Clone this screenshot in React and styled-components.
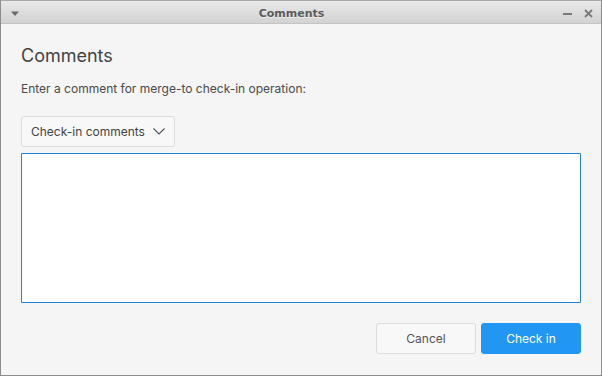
import React from "react";
import styled, { createGlobalStyle } from "styled-components";

const GlobalStyle = createGlobalStyle`
  html, body {
    margin: 0;
    padding: 0;
    background: #f4f4f4;
  }
  * {
    box-sizing: border-box;
  }
`;

const Window = styled.div`
  width: 602px;
  height: 376px;
  display: flex;
  flex-direction: column;
  border: 1px solid #8c8c8c;
  border-top-color: #a8a8a8;
  background: #f5f5f5;
  font-family: Inter, "Noto Sans", sans-serif;
  color: #454545;
`;

const TitleBar = styled.div`
  height: 23px;
  flex: none;
  display: flex;
  align-items: center;
  padding: 3px 8px 0 9px;
  background: linear-gradient(#e9e9e9, #d2d2d2);
  border-bottom: 1px solid #c4c4c4;
`;

const TitleText = styled.div`
  flex: 1;
  text-align: center;
  font-family: "DejaVu Sans", sans-serif;
  font-weight: bold;
  font-size: 11px;
  color: #5a5a5a;
  text-shadow: 0 1px 0 rgba(255, 255, 255, 0.6);
`;

const TitleControls = styled.div`
  display: flex;
  align-items: center;
  gap: 12px;
`;

const Body = styled.div`
  flex: 1;
  display: flex;
  flex-direction: column;
  padding: 20px 20px 21px 20px;
`;

const Heading = styled.h1`
  margin: 0;
  font-size: 18px;
  font-weight: 400;
  line-height: 24px;
  color: #444;
`;

const Label = styled.p`
  margin: 13px 0 0 0;
  font-size: 12px;
  line-height: 16px;
  color: #4a4a4a;
`;

const Dropdown = styled.button`
  align-self: flex-start;
  margin-top: 19px;
  height: 31px;
  width: 154px;
  display: flex;
  align-items: center;
  gap: 8px;
  padding: 0 0 0 9px;
  font-family: inherit;
  font-size: 12px;
  color: #444;
  background: #f8f8f8;
  border: 1px solid #dcdcdc;
  border-radius: 3px;
`;

const CommentBox = styled.textarea`
  margin-top: 6px;
  height: 150px;
  width: 100%;
  resize: none;
  background: #fff;
  border: 1px solid #1e7fd6;
  border-radius: 1px;
  outline: none;
  font-family: inherit;
  font-size: 12px;
`;

const Footer = styled.div`
  margin-top: auto;
  display: flex;
  justify-content: flex-end;
  gap: 5px;
`;

const Button = styled.button`
  width: 100px;
  height: 31px;
  font-family: inherit;
  font-size: 12px;
  border-radius: 3px;
  border: 1px solid ${(p) => (p.$primary ? "#2196f3" : "#dcdcdc")};
  background: ${(p) => (p.$primary ? "#2196f3" : "#f8f8f8")};
  color: ${(p) => (p.$primary ? "#fff" : "#555")};
`;

function App() {
  return (
    <>
      <GlobalStyle />
      <Window>
        <TitleBar>
          <svg width="10" height="6" viewBox="0 0 10 6">
            <path d="M1 0.5h8L5 5z" fill="#6a6a6a" />
          </svg>
          <TitleText>Comments</TitleText>
          <TitleControls>
            <svg width="9" height="9" viewBox="0 0 9 9">
              <rect x="0" y="4" width="9" height="2" fill="#7a7a7a" />
            </svg>
            <svg width="9" height="9" viewBox="0 0 9 9">
              <path d="M1 1l7 7M8 1l-7 7" stroke="#7a7a7a" strokeWidth="1.8" />
            </svg>
          </TitleControls>
        </TitleBar>
        <Body>
          <Heading>Comments</Heading>
          <Label>Enter a comment for merge-to check-in operation:</Label>
          <Dropdown>
            Check-in comments
            <svg width="12" height="7" viewBox="0 0 12 7">
              <path d="M0.5 0.5L6 6l5.5-5.5" fill="none" stroke="#555" strokeWidth="1.1" />
            </svg>
          </Dropdown>
          <CommentBox />
          <Footer>
            <Button>Cancel</Button>
            <Button $primary>Check in</Button>
          </Footer>
        </Body>
      </Window>
    </>
  );
}

export default App;
